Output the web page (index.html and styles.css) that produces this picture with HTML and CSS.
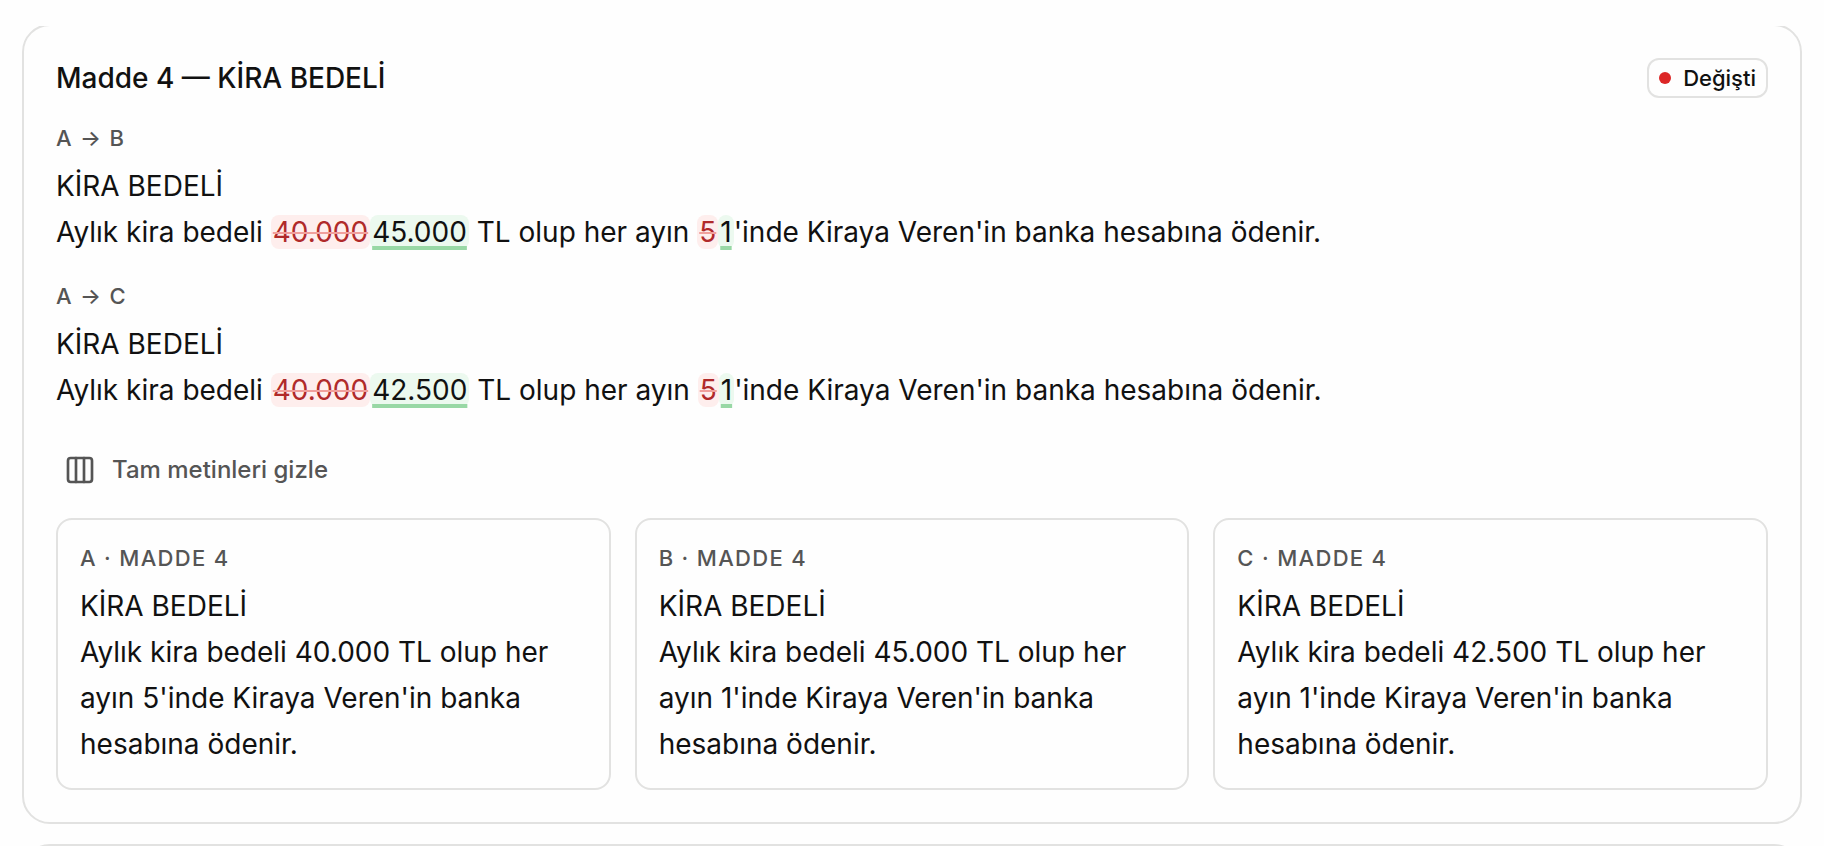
FILE: index.html
```html
<!DOCTYPE html>
<html lang="tr">
  <head>
    <meta charset="utf-8" />
    <meta name="viewport" content="width=device-width, initial-scale=1.0" />
    <title>Madde 4</title>
    <link rel="stylesheet" href="styles.css">
  </head>

  <body>
    <div class="topbar"></div>
    <main class="maddeler">
      <article class="madde">
        <header class="madde-ust">
          <h2>Madde 4 — KİRA BEDELİ</h2>
          <span class="durum"><span class="nokta"></span>Değişti</span>
        </header>

        <section class="fark">
          <h3 class="etiket">A → B</h3>
          <p>KİRA BEDELİ<br>Aylık kira bedeli <del>40.000</del><ins>45.000</ins> TL olup her ayın <del>5</del><ins>1</ins>'inde Kiraya Veren'in banka hesabına ödenir.</p>
        </section>

        <section class="fark">
          <h3 class="etiket">A → C</h3>
          <p>KİRA BEDELİ<br>Aylık kira bedeli <del>40.000</del><ins>42.500</ins> TL olup her ayın <del>5</del><ins>1</ins>'inde Kiraya Veren'in banka hesabına ödenir.</p>
        </section>

        <button type="button" class="gizle">
          <svg viewBox="0 0 24 24" aria-hidden="true">
            <rect x="3" y="3" width="18" height="18" rx="2" />
            <path d="M9 3v18M15 3v18" />
          </svg>
          Tam metinleri gizle
        </button>

        <div class="metinler">
          <section class="metin">
            <h3 class="etiket">A · MADDE 4</h3>
            <p>KİRA BEDELİ<br>Aylık kira bedeli 40.000 TL olup her ayın 5'inde Kiraya Veren'in banka hesabına ödenir.</p>
          </section>
          <section class="metin">
            <h3 class="etiket">B · MADDE 4</h3>
            <p>KİRA BEDELİ<br>Aylık kira bedeli 45.000 TL olup her ayın 1'inde Kiraya Veren'in banka hesabına ödenir.</p>
          </section>
          <section class="metin">
            <h3 class="etiket">C · MADDE 4</h3>
            <p>KİRA BEDELİ<br>Aylık kira bedeli 42.500 TL olup her ayın 1'inde Kiraya Veren'in banka hesabına ödenir.</p>
          </section>
        </div>
      </article>

      <article class="madde"></article>
    </main>
  </body>
</html>
```
FILE: styles.css
```css
* {
  box-sizing: border-box;
}

body {
  margin: 0;
  background-color: #fefefe;
  color: #111;
  font-family: Inter, sans-serif;
  font-size: 28px;
  line-height: 46px;
}

h2,
h3,
p {
  margin: 0;
}

/* covers the list while it scrolls */
.topbar {
  position: fixed;
  top: 0;
  left: 0;
  right: 0;
  height: 26px;
  background-color: #fefefe;
}

.maddeler {
  display: flex;
  flex-direction: column;
  gap: 20px;
  height: 100vh;
  padding: 24px 22px 0;
  overflow-y: auto;
  scrollbar-width: none;
}

.madde {
  flex-shrink: 0;
  padding: 32px;
  border: 2px solid #e2e2e1;
  border-radius: 28px;
}

.madde-ust {
  display: flex;
  justify-content: space-between;
  align-items: center;
}

.madde-ust h2 {
  font-size: 28px;
  line-height: 40px;
  font-weight: 500;
}

.durum {
  display: flex;
  align-items: center;
  gap: 12px;
  padding: 0 10px;
  border: 2px solid #e2e2e1;
  border-radius: 12px;
  font-size: 22px;
  line-height: 36px;
  font-weight: 500;
}

.nokta {
  width: 12px;
  height: 12px;
  border-radius: 50%;
  background-color: #dc2626;
}

.fark {
  margin-top: 22px;
}

.fark + .fark {
  margin-top: 23px;
}

.etiket {
  margin-bottom: 7px;
  color: #555;
  font-size: 22px;
  line-height: 36px;
  font-weight: 500;
  letter-spacing: 0.06em;
}

del,
ins {
  padding: 0 2px;
  border-radius: 8px;
}

del {
  background-color: #feeeed;
  color: #b02a2a;
  text-decoration: line-through 2px #f0a09c;
}

ins {
  background-color: #ecf9ef;
  text-decoration: underline 4px #98d8a5;
  text-underline-offset: 4px;
}

.gizle {
  display: flex;
  align-items: center;
  gap: 16px;
  margin: 29px 0 20px;
  padding: 10px 8px;
  border: 0;
  background: none;
  color: #555;
  font-family: inherit;
  font-size: 24px;
  line-height: 36px;
  font-weight: 500;
  cursor: pointer;
}

.gizle svg {
  width: 32px;
  height: 32px;
  fill: none;
  stroke: currentColor;
  stroke-width: 2;
  stroke-linecap: round;
  stroke-linejoin: round;
}

.metinler {
  display: grid;
  grid-template-columns: repeat(3, 1fr);
  gap: 24px;
}

.metin {
  padding: 20px 22px 21px;
  border: 2px solid #e2e2e1;
  border-radius: 16px;
}
```
